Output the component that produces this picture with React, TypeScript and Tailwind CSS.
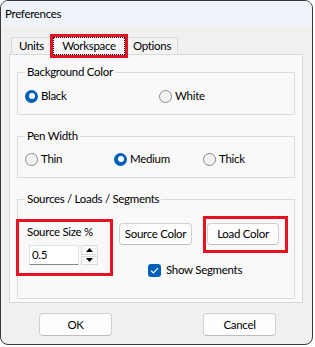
import React from "react"

type RadioProps = {
    label: string
    checked?: boolean
    className?: string
}

function Radio({ label, checked, className = "" }: RadioProps) {
    return (
        <label className={`flex items-center gap-[3px] ${className}`}>
            {checked ? (
                <span className="flex size-[13px] items-center justify-center rounded-full bg-[#005fb8]">
                    <span className="size-[6px] rounded-full bg-white" />
                </span>
            ) : (
                <span className="size-[13px] rounded-full border border-[#8a8a8a] bg-[#f3f3f3]" />
            )}
            <span>{label}</span>
        </label>
    )
}

function Group({ title, children }: { title: string; children: React.ReactNode }) {
    return (
        <fieldset className="border border-[#dcdcdc] px-[7px] pb-[10px]">
            <legend className="px-[2px] leading-[16px]">{title}</legend>
            {children}
        </fieldset>
    )
}

function RedMark({ className }: { className: string }) {
    return <span className={`pointer-events-none absolute border-[3px] border-[#e81123] ${className}`} />
}

function WinButton({ label, className = "" }: { label: string; className?: string }) {
    return (
        <button className={`flex items-center justify-center rounded-[4px] border border-[#d0d0d0] border-b-[#bcbcbc] bg-[#fdfdfd] ${className}`}>
            {label}
        </button>
    )
}

export default function App() {
    return (
        <div className="h-[347px] w-[315px] bg-white font-[Lato,'Segoe_UI',sans-serif] text-[11.5px] leading-[16px] tracking-[-0.3px] text-black">
            <div className="flex h-[345px] w-[313px] flex-col overflow-hidden rounded-[8px] border border-[#3a3a3a] bg-[#f0f0f0]">
                <div className="flex h-[25px] shrink-0 items-center bg-[#eef4f9] pl-[4px]">Preferences</div>

                {/* tabs */}
                <div className="flex h-[28px] shrink-0 items-end pl-[10px]">
                    <div className="flex h-[17px] w-[41px] items-center justify-center border border-b-0 border-[#d9d9d9] bg-[#f4f4f4]">
                        Units
                    </div>
                    <div className="relative z-10 -mb-px flex h-[20px] w-[75px] border border-b-0 border-l-0 border-[#d9d9d9] bg-[#f9f9f9] px-[1px] pt-[1px]">
                        <span className="flex flex-1 items-center justify-center border border-dotted border-black">
                            Workspace
                        </span>
                        <RedMark className="-left-[2px] -top-[2px] h-[24px] w-[78px]" />
                    </div>
                    <div className="flex h-[17px] w-[51px] items-center justify-center border border-b-0 border-l-0 border-[#d9d9d9] bg-[#f4f4f4]">
                        Options
                    </div>
                </div>

                {/* panel */}
                <div className="ml-[8px] flex h-[249px] w-[294px] shrink-0 flex-col gap-[13px] border border-[#d9d9d9] bg-[#f9f9f9] px-[7px] pt-[9px]">
                    <Group title="Background Color">
                        <div className="mt-[8px] flex h-[16px]">
                            <Radio label="Black" checked className="w-[134px]" />
                            <Radio label="White" />
                        </div>
                    </Group>

                    <Group title="Pen Width">
                        <div className="mt-[7px] flex h-[16px]">
                            <Radio label="Thin" className="w-[89px]" />
                            <Radio label="Medium" checked className="w-[89px]" />
                            <Radio label="Thick" />
                        </div>
                    </Group>

                    <Group title="Sources / Loads / Segments">
                        <div className="flex h-[81px]">
                            <div className="relative w-[94px] pt-[17px]">
                                <div className="pl-[2px]">Source Size %</div>
                                <div className="ml-[4px] mt-[5px] flex gap-[2px]">
                                    <div className="flex h-[20px] w-[50px] items-center border border-[#e3e3e3] border-b-[#8a8a8a] bg-white pl-[2px]">
                                        0.5
                                    </div>
                                    <div className="flex h-[20px] w-[17px] flex-col gap-px">
                                        <span className="flex flex-1 items-center justify-center border border-[#dcdcdc] bg-[#fbfbfb]">
                                            <svg width="7" height="4" viewBox="0 0 7 4">
                                                <path d="M3.5 0 L7 4 L0 4 Z" fill="#000" />
                                            </svg>
                                        </span>
                                        <span className="flex flex-1 items-center justify-center border border-[#dcdcdc] bg-[#fbfbfb]">
                                            <svg width="7" height="4" viewBox="0 0 7 4">
                                                <path d="M0 0 L7 0 L3.5 4 Z" fill="#000" />
                                            </svg>
                                        </span>
                                    </div>
                                </div>
                                <RedMark className="-left-[9px] top-[12px] h-[57px] w-[97px]" />
                            </div>

                            <div className="flex flex-col pt-[16px]">
                                <div className="flex gap-[15px]">
                                    <WinButton label="Source Color" className="h-[22px] w-[73px]" />
                                    <div className="relative">
                                        <WinButton label="Load Color" className="h-[22px] w-[72px]" />
                                        <RedMark className="-left-[4px] -top-[7px] h-[37px] w-[85px]" />
                                    </div>
                                </div>
                                <label className="ml-[29px] mt-[17px] flex h-[16px] items-center gap-[5px]">
                                    <span className="flex size-[13px] items-center justify-center rounded-[3px] bg-[#005fb8]">
                                        <svg width="9" height="7" viewBox="0 0 9 7">
                                            <path d="M1 3.6 L3.4 6 L8 1.2" fill="none" stroke="#fff" strokeWidth="1.2" />
                                        </svg>
                                    </span>
                                    <span>Show Segments</span>
                                </label>
                            </div>
                        </div>
                    </Group>
                </div>

                {/* dialog buttons */}
                <div className="mt-[10px] flex gap-[91px] pl-[38px]">
                    <WinButton label="OK" className="h-[23px] w-[73px]" />
                    <WinButton label="Cancel" className="h-[23px] w-[73px]" />
                </div>
            </div>
        </div>
    )
}
